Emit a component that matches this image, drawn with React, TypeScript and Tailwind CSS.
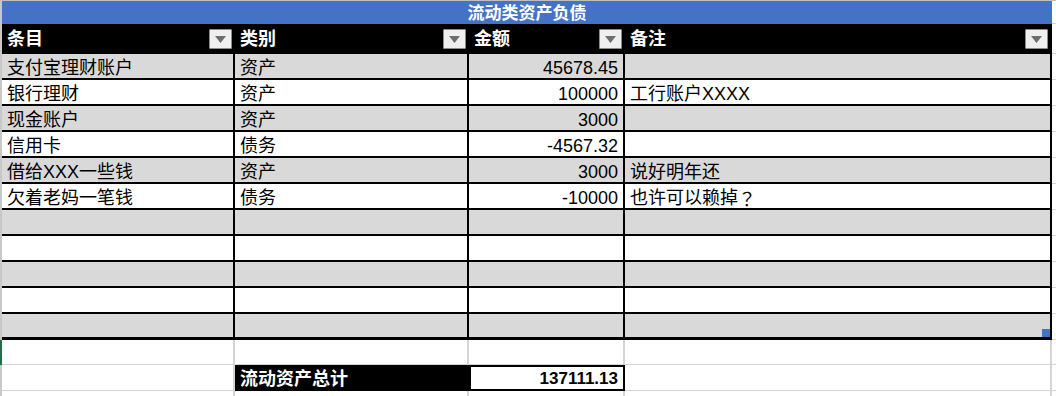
import React from "react";

const font = "font-['Liberation_Sans','Noto_Sans_CJK_SC',sans-serif]";

const widths = ["w-[233px]", "w-[234px]", "w-[156px]", "w-[427px]"];

const rows: string[][] = [
  ["支付宝理财账户", "资产", "45678.45", ""],
  ["银行理财", "资产", "100000", "工行账户XXXX"],
  ["现金账户", "资产", "3000", ""],
  ["信用卡", "债务", "-4567.32", ""],
  ["借给XXX一些钱", "资产", "3000", "说好明年还"],
  ["欠着老妈一笔钱", "债务", "-10000", "也许可以赖掉？"],
  ["", "", "", ""],
  ["", "", "", ""],
  ["", "", "", ""],
  ["", "", "", ""],
  ["", "", "", ""],
];

function Strip({ green }: { green?: boolean }) {
  return <div className={green ? "w-[2px] shrink-0 bg-[#1e7145]" : "w-[2px] shrink-0 bg-[#c8c8c8]"} />;
}

function FilterButton() {
  return (
    <div className="w-[23px] h-[20px] flex items-center justify-center bg-[#efefef] border border-[#8c8c8c] rounded-[1px]">
      <svg width="11" height="7" viewBox="0 0 11 7">
        <polygon points="0,0 11,0 5.5,7" fill="#6e6e6e" />
      </svg>
    </div>
  );
}

function Tail({ className = "" }: { className?: string }) {
  return <div className={`flex-1 bg-white ${className}`} />;
}

// full-width question mark sits centred in its box, like the TC face draws it
function CellText({ text }: { text: string }) {
  if (!text.includes("？")) return <>{text}</>;
  const [a, b] = text.split("？");
  return (
    <>
      {a}
      <span className="font-['Noto_Sans_CJK_TC',sans-serif]">？</span>
      {b}
    </>
  );
}

export default function App() {
  const headers = ["条目", "类别", "金额", "备注"];
  return (
    <div className={`w-[1056px] h-[396px] overflow-hidden bg-white text-black ${font}`}>
      <div className="h-px bg-[#bfbfbf]" />

      {/* title */}
      <div className="flex h-[23px]">
        <Strip />
        <div className="w-[1050px] bg-[#4472c4] flex items-center justify-center pt-[1px] text-white font-bold text-[17px] leading-none">
          流动类资产负债
        </div>
        <Tail className="border-b border-[#d4d4d4]" />
      </div>

      {/* header */}
      <div className="flex h-[30px]">
        <Strip />
        {headers.map((h, i) => (
          <div
            key={h}
            className={`${widths[i]} bg-black flex items-center justify-between pl-[5px] ${i === 3 ? "pr-[4px]" : "pr-[3px]"} text-white font-bold text-[18px]`}
          >
            <span className="pt-[1px]">{h}</span>
            <FilterButton />
          </div>
        ))}
        <Tail className="border-b border-[#d4d4d4]" />
      </div>

      {/* data rows */}
      {rows.map((r, ri) => {
        const last = ri === rows.length - 1;
        const bg = ri % 2 === 0 ? "bg-[#d9d9d9]" : "bg-white";
        return (
          <div key={ri} className="flex h-[26px]">
            <Strip />
            {r.map((c, ci) => (
              <div
                key={ci}
                className={`${widths[ci]} ${bg} relative border-r-2 border-black ${last ? "border-b-[3px]" : "border-b-2"} flex items-center pt-[3px] text-[18px] leading-none whitespace-nowrap ${
                  ci === 2 ? "justify-end pr-[5px]" : "pl-[5px]"
                }`}
              >
                <CellText text={c} />
                {last && ci === 3 && (
                  <div className="absolute right-0 bottom-0 w-[8px] h-[8px] bg-[#4472c4]" />
                )}
              </div>
            ))}
            <Tail className="border-b border-[#d4d4d4]" />
          </div>
        );
      })}

      {/* blank row */}
      <div className="flex h-[25px]">
        <Strip green />
        {widths.map((w, i) => (
          <div key={i} className={`${w} border-r-2 border-b border-[#d4d4d4]`} />
        ))}
        <Tail className="border-b border-[#d4d4d4]" />
      </div>

      {/* total row */}
      <div className="flex h-[26px]">
        <Strip />
        <div className={`${widths[0]} border-r-2 border-b border-[#d4d4d4]`} />
        <div className={`${widths[1]} bg-black text-white font-bold text-[18px] flex items-center pt-[2px] pl-[5px]`}>
          流动资产总计
        </div>
        <div className={`${widths[2]} border-2 border-black flex items-center justify-end pt-[2px] pr-[5px] font-bold text-[17px]`}>
          137111.13
        </div>
        <div className={`${widths[3]} border-r-2 border-b border-[#d4d4d4]`} />
        <Tail className="border-b border-[#d4d4d4]" />
      </div>

      {/* partial row */}
      <div className="flex h-[10px]">
        <Strip />
        {widths.map((w, i) => (
          <div key={i} className={`${w} border-r-2 border-[#d4d4d4]`} />
        ))}
        <Tail />
      </div>
    </div>
  );
}
